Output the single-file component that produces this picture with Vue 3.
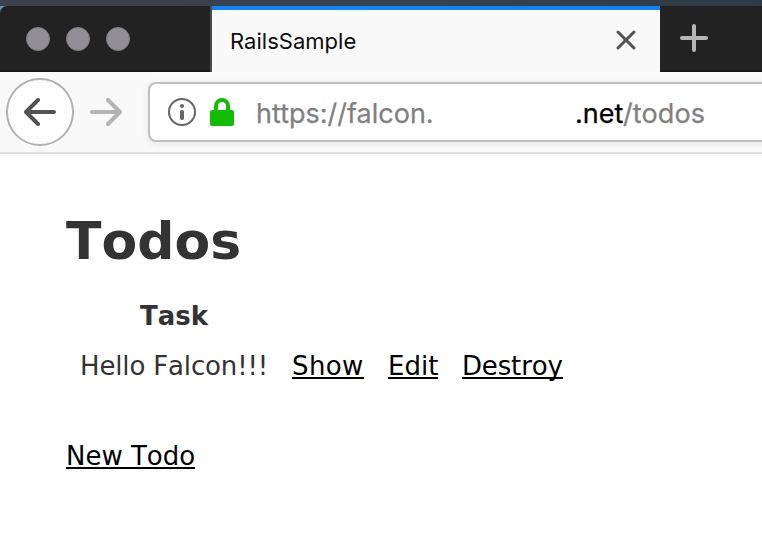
<script setup>
const actions = [
  { label: 'Show', cls: 'show' },
  { label: 'Edit', cls: 'edit' },
  { label: 'Destroy', cls: 'destroy' },
]
</script>

<template>
  <div class="window">
    <div class="desktop"></div>
    <header class="frame">
      <div class="tabs">
        <div class="controls"><i v-for="n in 3" :key="n"></i></div>
        <div class="tab">
          <span class="tab-title">RailsSample</span>
          <svg class="close" width="20" height="20" viewBox="0 0 20 20"><path d="M2 2L18 18M18 2L2 18" /></svg>
        </div>
        <svg class="plus" width="28" height="28" viewBox="0 0 28 28"><path d="M14 2V26M2 14H26" /></svg>
      </div>
    </header>
    <nav class="toolbar">
      <button class="back" aria-label="Back">
        <svg width="32" height="28" viewBox="0 0 32 28"><path d="M30 14H3M14 2L2 14L14 26" /></svg>
      </button>
      <svg class="forward" width="32" height="28" viewBox="0 0 32 28"><path d="M2 14H29M18 2L30 14L18 26" /></svg>
      <div class="address">
        <svg class="info" width="28" height="28" viewBox="0 0 28 28">
          <circle cx="14" cy="14" r="13" fill="none" stroke="#666" stroke-width="2" />
          <circle cx="14" cy="8" r="2.1" fill="#666" />
          <rect x="12" y="12" width="4" height="10" rx="1.8" fill="#666" />
        </svg>
        <svg class="lock" width="24" height="28" viewBox="0 0 24 28">
          <path d="M6 14V8a6 6 0 0 1 12 0V14" fill="none" stroke="#12bc00" stroke-width="4" />
          <rect y="12" width="24" height="16" rx="2" fill="#12bc00" />
        </svg>
        <span class="url host">https://falcon.</span>
        <span class="url domain">.net</span><span class="url path">/todos</span>
      </div>
    </nav>
    <main>
      <h1>Todos</h1>
      <div class="grid">
        <div class="th"><span>Task</span></div>
        <div class="row">
          <span class="task">Hello Falcon!!!</span>
          <a v-for="a in actions" :key="a.label" :class="a.cls"><span>{{ a.label }}</span></a>
        </div>
      </div>
      <a class="new"><span>New Todo</span></a>
    </main>
  </div>
</template>

<style>
body { margin: 0; background: #fff; }
</style>

<style scoped>
.window { width: 762px; height: 544px; overflow: hidden; background: #fff; display: flex; flex-direction: column; }
.desktop { height: 6px; flex: none; background: linear-gradient(90deg, #3b424b, #38424c 55%, #2d3b48); }
.frame { flex: none; background: linear-gradient(90deg, #6c8fae 8px, #222 8px); }
.tabs { height: 66px; display: flex; background: #222; border-radius: 7px 0 0 0; box-shadow: inset 0 -2px #1b191a; }
.controls { width: 210px; flex: none; box-sizing: border-box; padding: 21px 0 0 26px; display: flex; gap: 16px; }
.controls i { width: 24px; height: 24px; box-sizing: border-box; border-radius: 50%; background: #918f95; border: 1px solid #7f7d83; }
.tab { width: 450px; flex: none; box-sizing: border-box; border-left: 2px solid #4b4b4b; background: linear-gradient(#0a84ff 4px, #f9f9fa 4px); display: flex; align-items: center; justify-content: space-between; padding: 4px 24px 0 18px; }
.tab-title { font: 22px/62px Inter, sans-serif; letter-spacing: .02px; color: #0c0c0d; white-space: nowrap; }
.close { fill: none; stroke: #525252; stroke-width: 3; stroke-linecap: round; margin-top: -3px; }
.plus { flex: none; margin: 18px 0 0 20px; fill: none; stroke: #b5b5b5; stroke-width: 4; stroke-linecap: round; }
.toolbar { height: 82px; flex: none; box-sizing: border-box; border-bottom: 2px solid #e0e0e0; background: #f9f9fa; display: flex; align-items: center; padding-left: 6px; }
.back { width: 68px; height: 68px; flex: none; padding: 0; border: 2px solid #b1b1b1; border-radius: 50%; background: #fff; display: flex; align-items: center; justify-content: center; }
.back svg, .forward { flex: none; fill: none; stroke: #525252; stroke-width: 4; stroke-linecap: round; stroke-linejoin: round; }
.forward { margin-left: 16px; stroke: #b4b4b4; }
.address { margin-left: 26px; width: 640px; height: 60px; flex: none; box-sizing: border-box; border: 2px solid #bebebe; border-radius: 8px; background: #fff; box-shadow: 0 2px 8px rgba(0,0,0,.07); display: flex; align-items: center; padding-left: 18px; }
.lock { margin-left: 14px; }
.url { flex: none; font: 27px/56px Inter, sans-serif; color: #808080; white-space: nowrap; padding-top: 4px; -webkit-text-stroke: .25px currentColor; }
.host { margin-left: 22px; width: 319px; }
.domain { color: #000; width: 48px; }
.path { letter-spacing: .1px; }
main { padding: 57px 66px 0; font: 26px/40px "DejaVu Sans", Verdana, sans-serif; color: #333; font-kerning: none; }
h1 { margin: 0; font-size: 52px; line-height: 60px; letter-spacing: 0; }
.grid { margin-top: 25px; }
.th { padding-left: 74px; font-weight: bold; height: 50px; }
.row { display: flex; padding-left: 14px; }
.task { width: 212px; white-space: nowrap; letter-spacing: -.15px; }
a { color: #000; white-space: nowrap; }
a span { display: inline-block; height: 33px; box-sizing: border-box; border-bottom: 2px solid #000; }
.show { width: 96px; letter-spacing: .4px; }
.edit { width: 74px; }
.destroy { letter-spacing: -.15px; }
.new { display: block; margin-top: 50px; }
</style>
